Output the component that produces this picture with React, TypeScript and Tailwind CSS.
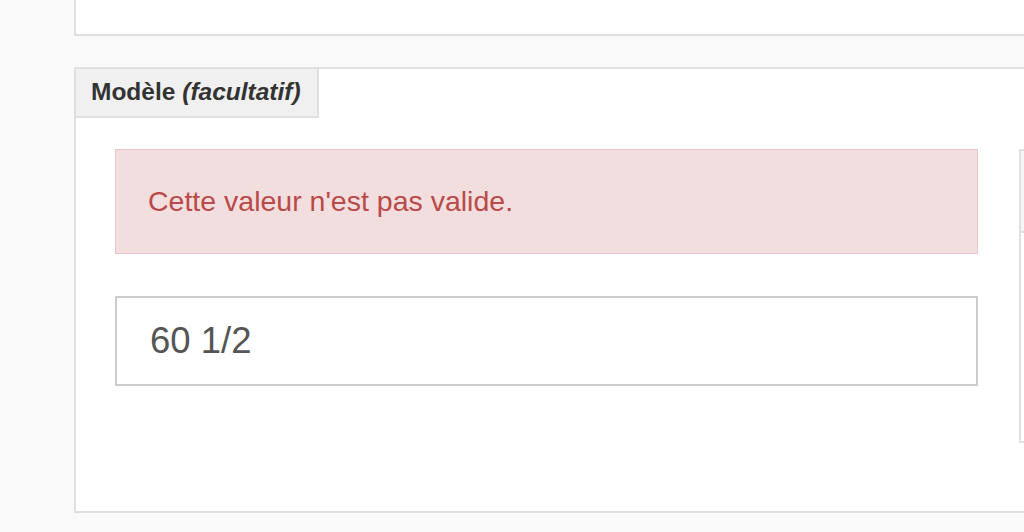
export default function App() {
  return (
    <div
      className="w-[1024px] h-[532px] overflow-hidden bg-[#f9f9f9] pl-[74px]"
      style={{ fontFamily: '"Liberation Sans", Arial, sans-serif' }}
    >
      <div className="h-[36px] bg-white border-l-2 border-b-2 border-[#e0e0e0]" />
      <div className="mt-[31px] h-[446px] bg-white border-l-2 border-t-2 border-b-2 border-[#e0e0e0] flex flex-col">
        <div className="w-[243px] h-[49px] bg-[#f0f0f0] border-r-2 border-b-2 border-[#e0e0e0] flex items-center pl-[15px] text-[24.5px] font-bold text-[#333] whitespace-nowrap">
          <span>Modèle&nbsp;</span>
          <span className="italic">(facultatif)</span>
        </div>
        <div className="flex pl-[39px] pt-[31px]">
          <div className="w-[863px] shrink-0 flex flex-col gap-[42px]">
            <div className="h-[105px] bg-[#f2dede] border border-[#e8c6cc] flex items-center pl-[32px] text-[28.5px] text-[#b94a48]">
              Cette valeur n'est pas valide.
            </div>
            <div className="h-[90px] bg-white border-2 border-[#cccccc] flex items-center pl-[33px] text-[36.5px] text-[#555]">
              60 1/2
            </div>
          </div>
          <div className="ml-[41px] w-[40px] shrink-0 h-[294px] border-2 border-r-0 border-[#e0e0e0] flex flex-col">
            <div className="h-[82px] bg-[#f5f5f5] border-b-2 border-[#e0e0e0]" />
          </div>
        </div>
      </div>
    </div>
  );
}
